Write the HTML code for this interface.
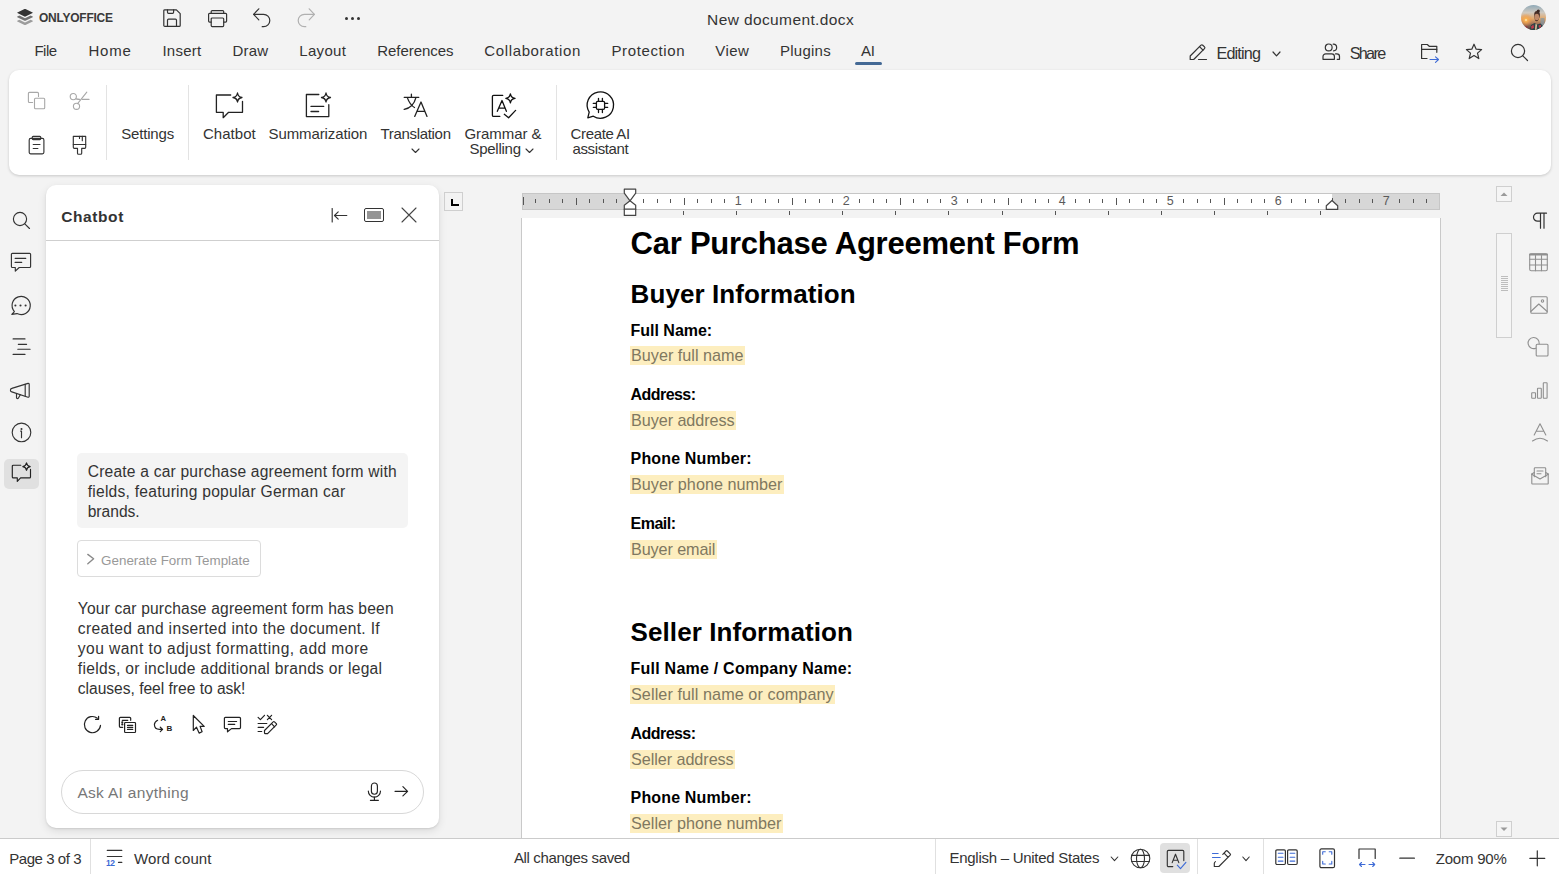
<!DOCTYPE html>
<html><head><meta charset="utf-8"><style>
html,body{margin:0;padding:0;}
body{width:1559px;height:874px;position:relative;overflow:hidden;background:#f3f3f3;font-family:"Liberation Sans",sans-serif;}
.t{position:absolute;white-space:nowrap;}
.i{position:absolute;overflow:visible;}
.b{position:absolute;box-sizing:border-box;}
</style></head><body>
<div class="b" style="left:9px;top:70px;width:1542px;height:105px;background:#fff;border-radius:10px;box-shadow:0 1px 3px rgba(0,0,0,.18);"></div>
<div class="b" style="left:521px;top:218px;width:920px;height:621px;background:#fff;border-left:1px solid #c9c9c9;border-right:1px solid #c9c9c9;"></div>
<div class="b" style="left:0;top:838px;width:1559px;height:36px;background:#fff;border-top:1px solid #cbcbcb;"></div>
<div class="b" style="left:46px;top:185px;width:393px;height:643px;background:#fff;border-radius:10px;box-shadow:0 3px 8px rgba(0,0,0,.10),0 1px 2px rgba(0,0,0,.10);"></div>
<div class="b" style="left:46px;top:240px;width:393px;height:1px;background:#cfcfcf;"></div>
<div class="t" style="left:39.00px;top:11.64px;font-size:12px;line-height:12px;color:#3a3a3a;font-weight:bold;letter-spacing:-0.250px;">ONLYOFFICE</div>
<div class="t" style="left:707.10px;top:11.68px;font-size:15.5px;line-height:15.5px;color:#333;letter-spacing:0.384px;">New document.docx</div>
<div class="t" style="left:34.40px;top:43.30px;font-size:15px;line-height:15px;color:#333;letter-spacing:-0.450px;">File</div>
<div class="t" style="left:88.50px;top:43.30px;font-size:15px;line-height:15px;color:#333;letter-spacing:0.767px;">Home</div>
<div class="t" style="left:162.40px;top:43.30px;font-size:15px;line-height:15px;color:#333;letter-spacing:0.260px;">Insert</div>
<div class="t" style="left:232.40px;top:43.30px;font-size:15px;line-height:15px;color:#333;letter-spacing:0.217px;">Draw</div>
<div class="t" style="left:299.20px;top:43.30px;font-size:15px;line-height:15px;color:#333;letter-spacing:0.350px;">Layout</div>
<div class="t" style="left:377.20px;top:43.30px;font-size:15px;line-height:15px;color:#333;letter-spacing:-0.044px;">References</div>
<div class="t" style="left:484.30px;top:43.30px;font-size:15px;line-height:15px;color:#333;letter-spacing:0.633px;">Collaboration</div>
<div class="t" style="left:611.50px;top:43.30px;font-size:15px;line-height:15px;color:#333;letter-spacing:0.617px;">Protection</div>
<div class="t" style="left:715.30px;top:43.30px;font-size:15px;line-height:15px;color:#333;letter-spacing:0.400px;">View</div>
<div class="t" style="left:780.00px;top:43.30px;font-size:15px;line-height:15px;color:#333;letter-spacing:0.250px;">Plugins</div>
<div class="t" style="left:861.00px;top:43.30px;font-size:15px;line-height:15px;color:#333;letter-spacing:-0.250px;">AI</div>
<div class="b" style="left:855px;top:62px;width:27px;height:3px;background:#446995;border-radius:2px;"></div>
<div class="t" style="left:1216.40px;top:45.38px;font-size:16.2px;line-height:16.2px;color:#333;letter-spacing:-0.808px;">Editing</div>
<div class="t" style="left:1349.70px;top:45.38px;font-size:16.2px;line-height:16.2px;color:#333;letter-spacing:-1.688px;">Share</div>
<div class="t" style="left:121.20px;top:126.40px;font-size:15px;line-height:15px;color:#333;letter-spacing:-0.171px;">Settings</div>
<div class="t" style="left:203.00px;top:126.30px;font-size:15px;line-height:15px;color:#333;letter-spacing:0.025px;">Chatbot</div>
<div class="t" style="left:268.50px;top:126.30px;font-size:15px;line-height:15px;color:#333;letter-spacing:-0.104px;">Summarization</div>
<div class="t" style="left:380.40px;top:126.30px;font-size:15px;line-height:15px;color:#333;letter-spacing:-0.305px;">Translation</div>
<div class="t" style="left:464.40px;top:126.05px;font-size:15px;line-height:15px;color:#333;letter-spacing:-0.037px;">Grammar &amp;</div>
<div class="t" style="left:469.40px;top:141.05px;font-size:15px;line-height:15px;color:#333;letter-spacing:-0.250px;">Spelling</div>
<div class="t" style="left:570.60px;top:126.05px;font-size:15px;line-height:15px;color:#333;letter-spacing:-0.369px;">Create AI</div>
<div class="t" style="left:572.50px;top:140.80px;font-size:15px;line-height:15px;color:#333;letter-spacing:-0.375px;">assistant</div>
<div class="b" style="left:106px;top:85px;width:1px;height:75px;background:#e3e3e3;"></div>
<div class="b" style="left:188px;top:85px;width:1px;height:75px;background:#e3e3e3;"></div>
<div class="b" style="left:556px;top:85px;width:1px;height:75px;background:#e3e3e3;"></div>
<div class="t" style="left:61.30px;top:209.08px;font-size:15.5px;line-height:15.5px;color:#333;font-weight:bold;letter-spacing:0.575px;">Chatbot</div>
<div class="b" style="left:77px;top:453px;width:331px;height:75px;background:#f4f4f4;border-radius:5px;"></div>
<div class="t" style="left:87.70px;top:463.79px;font-size:15.6px;line-height:15.6px;color:#333;letter-spacing:0.204px;">Create a car purchase agreement form with</div>
<div class="t" style="left:87.70px;top:483.79px;font-size:15.6px;line-height:15.6px;color:#333;letter-spacing:0.247px;">fields, featuring popular German car</div>
<div class="t" style="left:87.70px;top:503.79px;font-size:15.6px;line-height:15.6px;color:#333;">brands.</div>
<div class="b" style="left:77px;top:540px;width:184px;height:37px;border:1px solid #dcdcdc;border-radius:4px;"></div>
<div class="t" style="left:101.10px;top:554.05px;font-size:13.4px;line-height:13.4px;color:#999;">Generate Form Template</div>
<div class="t" style="left:77.80px;top:600.59px;font-size:15.6px;line-height:15.6px;color:#333;letter-spacing:0.172px;">Your car purchase agreement form has been</div>
<div class="t" style="left:77.80px;top:620.59px;font-size:15.6px;line-height:15.6px;color:#333;letter-spacing:0.344px;">created and inserted into the document. If</div>
<div class="t" style="left:77.80px;top:640.59px;font-size:15.6px;line-height:15.6px;color:#333;letter-spacing:0.434px;">you want to adjust formatting, add more</div>
<div class="t" style="left:77.80px;top:660.59px;font-size:15.6px;line-height:15.6px;color:#333;letter-spacing:0.295px;">fields, or include additional brands or legal</div>
<div class="t" style="left:77.80px;top:680.59px;font-size:15.6px;line-height:15.6px;color:#333;letter-spacing:-0.020px;">clauses, feel free to ask!</div>
<div class="b" style="left:61px;top:770px;width:363px;height:44px;border:1px solid #d8d8d8;border-radius:22px;"></div>
<div class="t" style="left:77.40px;top:784.68px;font-size:15.5px;line-height:15.5px;color:#777;letter-spacing:0.311px;">Ask AI anything</div>
<div class="t" style="left:9.20px;top:850.80px;font-size:15px;line-height:15px;color:#333;letter-spacing:-0.435px;">Page 3 of 3</div>
<div class="t" style="left:134.00px;top:850.90px;font-size:15px;line-height:15px;color:#333;letter-spacing:0.117px;">Word count</div>
<div class="t" style="left:513.90px;top:850.40px;font-size:15px;line-height:15px;color:#333;letter-spacing:-0.341px;">All changes saved</div>
<div class="t" style="left:949.50px;top:850.40px;font-size:15px;line-height:15px;color:#333;letter-spacing:-0.273px;">English – United States</div>
<div class="t" style="left:1435.80px;top:851.30px;font-size:15px;line-height:15px;color:#333;letter-spacing:-0.221px;">Zoom 90%</div>
<div class="b" style="left:90px;top:839px;width:1px;height:35px;background:#e0e0e0;"></div>
<div class="b" style="left:935px;top:839px;width:1px;height:35px;background:#e0e0e0;"></div>
<div class="b" style="left:1197px;top:839px;width:1px;height:35px;background:#e0e0e0;"></div>
<div class="b" style="left:1263px;top:839px;width:1px;height:35px;background:#e0e0e0;"></div>
<div class="b" style="left:1160px;top:843px;width:30px;height:30px;background:#e0e0e0;border-radius:4px;"></div>
<div class="t" style="left:630.60px;top:228.05px;font-size:31px;line-height:31px;color:#000;font-weight:bold;letter-spacing:-0.246px;">Car Purchase Agreement Form</div>
<div class="t" style="left:630.60px;top:281.29px;font-size:26px;line-height:26px;color:#000;font-weight:bold;letter-spacing:0.069px;">Buyer Information</div>
<div class="t" style="left:630.60px;top:323.15px;font-size:16px;line-height:16px;color:#000;font-weight:bold;letter-spacing:-0.022px;">Full Name:</div>
<div class="b" style="left:630px;top:346px;width:114.7px;height:19px;background:#fdeebf;"></div>
<div class="t" style="left:631.00px;top:346.58px;font-size:16.2px;line-height:16.2px;color:#80785f;">Buyer full name</div>
<div class="t" style="left:630.60px;top:386.95px;font-size:16px;line-height:16px;color:#000;font-weight:bold;letter-spacing:-0.564px;">Address:</div>
<div class="b" style="left:630px;top:411px;width:105.9px;height:19px;background:#fdeebf;"></div>
<div class="t" style="left:631.00px;top:411.58px;font-size:16.2px;line-height:16.2px;color:#80785f;letter-spacing:-0.063px;">Buyer address</div>
<div class="t" style="left:630.60px;top:451.35px;font-size:16px;line-height:16px;color:#000;font-weight:bold;letter-spacing:0.150px;">Phone Number:</div>
<div class="b" style="left:630px;top:475px;width:153.7px;height:19px;background:#fdeebf;"></div>
<div class="t" style="left:631.00px;top:475.58px;font-size:16.2px;line-height:16.2px;color:#80785f;letter-spacing:0.012px;">Buyer phone number</div>
<div class="t" style="left:630.60px;top:515.55px;font-size:16px;line-height:16px;color:#000;font-weight:bold;letter-spacing:-0.520px;">Email:</div>
<div class="b" style="left:630px;top:540px;width:86.7px;height:19px;background:#fdeebf;"></div>
<div class="t" style="left:631.00px;top:540.58px;font-size:16.2px;line-height:16.2px;color:#80785f;letter-spacing:-0.105px;">Buyer email</div>
<div class="t" style="left:630.60px;top:618.99px;font-size:26px;line-height:26px;color:#000;font-weight:bold;letter-spacing:0.074px;">Seller Information</div>
<div class="t" style="left:630.60px;top:661.25px;font-size:16px;line-height:16px;color:#000;font-weight:bold;letter-spacing:0.227px;">Full Name / Company Name:</div>
<div class="b" style="left:630px;top:685px;width:205.0px;height:19px;background:#fdeebf;"></div>
<div class="t" style="left:631.00px;top:685.58px;font-size:16.2px;line-height:16.2px;color:#80785f;letter-spacing:0.077px;">Seller full name or company</div>
<div class="t" style="left:630.60px;top:726.25px;font-size:16px;line-height:16px;color:#000;font-weight:bold;letter-spacing:-0.564px;">Address:</div>
<div class="b" style="left:630px;top:750px;width:105.0px;height:19px;background:#fdeebf;"></div>
<div class="t" style="left:631.00px;top:750.58px;font-size:16.2px;line-height:16.2px;color:#80785f;letter-spacing:-0.058px;">Seller address</div>
<div class="t" style="left:630.60px;top:790.15px;font-size:16px;line-height:16px;color:#000;font-weight:bold;letter-spacing:0.150px;">Phone Number:</div>
<div class="b" style="left:630px;top:814px;width:152.6px;height:19px;background:#fdeebf;"></div>
<div class="t" style="left:631.00px;top:814.58px;font-size:16.2px;line-height:16.2px;color:#80785f;">Seller phone number</div>
<svg class="i" style="left:16px;top:8px" width="18" height="18" viewBox="0 0 18 18">
<path d="M9 0.9 Q9.2 0.9 9.5 1.05 L16.6 4.5 Q17.1 4.8 16.6 5.1 L9.5 8.5 Q9 8.75 8.5 8.5 L1.4 5.1 Q0.9 4.8 1.4 4.5 L8.5 1.05 Q8.8 0.9 9 0.9 Z" fill="#333"/>
<path d="M3.4 7.6 L1.3 8.6 Q0.9 8.9 1.3 9.2 L8.5 12.7 Q9 12.95 9.5 12.7 L16.7 9.2 Q17.1 8.9 16.7 8.6 L14.6 7.6 L9.5 10.1 Q9 10.35 8.5 10.1 Z" fill="#707070"/>
<path d="M3.4 11.8 L1.3 12.8 Q0.9 13.1 1.3 13.4 L8.5 16.9 Q9 17.15 9.5 16.9 L16.7 13.4 Q17.1 13.1 16.7 12.8 L14.6 11.8 L9.5 14.3 Q9 14.55 8.5 14.3 Z" fill="#9c9c9c"/>
</svg>
<svg class="i" style="left:163px;top:9px;" width="18" height="18" viewBox="0 0 18 18" fill="none" stroke="#333" stroke-width="1.2" stroke-linecap="round" stroke-linejoin="round"><path d="M1.9 0.8 H13.4 L17.2 4.6 V16.4 A1 1 0 0 1 16.2 17.4 H1.8 A1 1 0 0 1 0.8 16.4 V1.8 A1 1 0 0 1 1.9 0.8 Z"/><path d="M4.5 0.8 V3.3 A1 1 0 0 0 5.5 4.3 H9.6 A1 1 0 0 0 10.6 3.3 V0.8"/><path d="M4.5 17.4 V11.2 A1 1 0 0 1 5.5 10.2 H12.5 A1 1 0 0 1 13.5 11.2 V17.4"/></svg>
<svg class="i" style="left:208px;top:10px;" width="19" height="17" viewBox="0 0 19 17" fill="none" stroke="#333" stroke-width="1.2" stroke-linecap="round" stroke-linejoin="round"><path d="M3.2 3.3 V1.6 A1 1 0 0 1 4.2 0.6 H14.7 A1 1 0 0 1 15.7 1.6 V3.3"/><path d="M3.2 12.1 H1.6 A1 1 0 0 1 0.6 11.1 V4.3 A1 1 0 0 1 1.6 3.3 H17.6 A1 1 0 0 1 18.6 4.3 V11.1 A1 1 0 0 1 17.6 12.1 H15.7"/><path d="M4.2 8 H14.7 A1 1 0 0 1 15.7 9 V15.6 A1 1 0 0 1 14.7 16.6 H4.2 A1 1 0 0 1 3.2 15.6 V9 A1 1 0 0 1 4.2 8 Z"/></svg>
<svg class="i" style="left:253px;top:8px;" width="18" height="20" viewBox="0 0 18 20" fill="none" stroke="#333" stroke-width="1.2" stroke-linecap="round" stroke-linejoin="round"><path d="M5.8 0.8 L0.6 6.3 L5.8 11.9"/><path d="M0.8 6.3 H10.6 A6.2 6.2 0 0 1 10.6 18.7 H9.2"/></svg>
<svg class="i" style="left:298px;top:8px;" width="18" height="20" viewBox="0 0 18 20" fill="none" stroke="#b0b0b0" stroke-width="1.2" stroke-linecap="round" stroke-linejoin="round"><path d="M11.2 0.8 L16.4 6.3 L11.2 11.9"/><path d="M16.2 6.3 H6.4 A6.2 6.2 0 0 0 6.4 18.7 H7.8"/></svg>
<div class="b" style="left:344.9px;top:16.8px;width:3.2px;height:3.2px;border-radius:50%;background:#333"></div>
<div class="b" style="left:350.7px;top:16.8px;width:3.2px;height:3.2px;border-radius:50%;background:#333"></div>
<div class="b" style="left:356.59999999999997px;top:16.8px;width:3.2px;height:3.2px;border-radius:50%;background:#333"></div>
<svg class="i" style="left:1521px;top:4.8px" width="25" height="25" viewBox="0 0 25 25">
<defs><linearGradient id="avs" x1="0" y1="0" x2="0" y2="1"><stop offset="0" stop-color="#8fa9b8"/><stop offset="0.3" stop-color="#cfc9c0"/><stop offset="0.55" stop-color="#e3a86a"/><stop offset="0.75" stop-color="#a07258"/><stop offset="1" stop-color="#4a3a3a"/></linearGradient>
<radialGradient id="avsun" cx="0.5" cy="0.5" r="0.5"><stop offset="0" stop-color="#fff4d0"/><stop offset="0.25" stop-color="#f7b050"/><stop offset="1" stop-color="#f09040" stop-opacity="0"/></radialGradient>
<clipPath id="avc"><circle cx="12.5" cy="12.5" r="12.5"/></clipPath></defs>
<g clip-path="url(#avc)"><rect width="25" height="25" fill="url(#avs)"/>
<circle cx="5" cy="15" r="6.5" fill="url(#avsun)"/>
<rect x="19.5" y="13" width="4" height="9" fill="#7f98aa" opacity="0.7"/>
<path d="M13.2 10 C13 7 14.5 5.6 16.5 6 C18.5 6.4 19.3 8.5 18.8 11 C18.4 13.5 17.5 15.5 16 16.3 L14.5 16 C13.6 14.5 13.3 12 13.2 10Z" fill="#4a3028"/>
<circle cx="17.3" cy="6" r="1.6" fill="#3a2622"/>
<ellipse cx="15.8" cy="12" rx="2.3" ry="3.3" fill="#c08a6a"/>
<path d="M8.5 25 L10 20 L13.5 18 L16 19.5 L19.5 18.5 L22 21 L23 25Z" fill="#2a4446"/>
<path d="M10 21.5 L12.5 19.5 L13 23 L10.5 24Z" fill="#c0394a"/>
<path d="M17.5 20.5 L20 19.8 L19.8 22.5 L18 22.8Z" fill="#c0394a"/>
<path d="M14.5 19 L16 19.5 L15.5 25 L14 25Z" fill="#e8c8a0"/>
<path d="M2 22 L6 21 L7 25 H1Z" fill="#a03040" opacity="0.8"/>
</g></svg>
<svg class="i" style="left:1189px;top:43px;" width="19" height="18" viewBox="0 0 19 18" fill="none" stroke="#333" stroke-width="1.2" stroke-linecap="round" stroke-linejoin="round"><path d="M1.2 16.5 V13 L12 2.2 A1.3 1.3 0 0 1 13.8 2.2 L15.5 3.9 A1.3 1.3 0 0 1 15.5 5.7 L4.7 16.5 Z"/><path d="M10.5 3.7 L14 7.2"/><path d="M9.5 16.5 H17.5"/></svg>
<svg class="i" style="left:1272px;top:51px;" width="9" height="6" viewBox="0 0 9 6" fill="none" stroke="#333" stroke-width="1.2" stroke-linecap="round" stroke-linejoin="round"><path d="M1 1 L4.5 4.8 L8 1"/></svg>
<svg class="i" style="left:1322px;top:43px;" width="19" height="18" viewBox="0 0 19 18" fill="none" stroke="#333" stroke-width="1.2" stroke-linecap="round" stroke-linejoin="round"><circle cx="6.7" cy="4.4" r="3.4"/><path d="M1 16.3 V13.5 A2.7 2.7 0 0 1 3.7 10.8 H9.7 A2.7 2.7 0 0 1 12.4 13.5 V16.3 Z"/><path d="M11.2 1.2 A3.3 3.3 0 0 1 11.5 7.8"/><path d="M13.5 10.8 H14.8 A2.7 2.7 0 0 1 17.5 13.5 V16.3 H15.2"/></svg>
<svg class="i" style="left:1420px;top:43px;" width="20" height="20" viewBox="0 0 20 20" fill="none" stroke="#333" stroke-width="1.2" stroke-linecap="round" stroke-linejoin="round"><path d="M7 15.5 H1.6 V1.5 H7.3 L9.2 3.3 H16.8 V9.3"/><path d="M1.6 6.3 H16.8"/></svg>
<svg class="i" style="left:1420px;top:43px;" width="20" height="20" viewBox="0 0 20 20" fill="none" stroke="#3e6bd6" stroke-width="1.1" stroke-linecap="round" stroke-linejoin="round"><path d="M10 16.5 H18.5 M15.5 13.8 L18.5 16.5 L15.5 19.3"/></svg>
<svg class="i" style="left:1465px;top:43px;" width="18" height="17" viewBox="0 0 18 17" fill="none" stroke="#333" stroke-width="1.2" stroke-linecap="round" stroke-linejoin="round"><path d="M9 1.2 L11.2 6.2 L16.6 6.6 L12.5 10.1 L13.8 15.6 L9 12.6 L4.2 15.6 L5.5 10.1 L1.4 6.6 L6.8 6.2 Z"/></svg>
<svg class="i" style="left:1510px;top:43px;" width="19" height="19" viewBox="0 0 19 19" fill="none" stroke="#333" stroke-width="1.2" stroke-linecap="round" stroke-linejoin="round"><circle cx="8" cy="8" r="6.6"/><path d="M12.8 12.8 L17.5 17.5"/></svg>
<svg class="i" style="left:27px;top:91px;" width="19" height="19" viewBox="0 0 19 19" fill="none" stroke="#a8a8a8" stroke-width="1.1" stroke-linecap="round" stroke-linejoin="round"><path d="M11.5 5.5 V2.4 A1 1 0 0 0 10.5 1.4 H2.4 A1 1 0 0 0 1.4 2.4 V10.5 A1 1 0 0 0 2.4 11.5 H5.6"/><rect x="7.5" y="7.3" width="10.2" height="10.4" rx="1"/></svg>
<svg class="i" style="left:69px;top:91px;" width="21" height="20" viewBox="0 0 21 20" fill="none" stroke="#a8a8a8" stroke-width="1.1" stroke-linecap="round" stroke-linejoin="round"><circle cx="4.3" cy="5.6" r="3.1"/><circle cx="7.5" cy="15.3" r="3.1"/><path d="M8.6 12.6 L17.8 1.1"/><path d="M7.1 7.9 Q9 8.4 10.6 8.4"/><path d="M13.3 8.4 H20"/></svg>
<svg class="i" style="left:28px;top:135px;" width="17" height="20" viewBox="0 0 17 20" fill="none" stroke="#333" stroke-width="1.15" stroke-linecap="round" stroke-linejoin="round"><rect x="1.2" y="3.4" width="14.7" height="15.4" rx="1.5"/><rect x="4.2" y="1.4" width="8.6" height="3.2" rx="1"/><path d="M5.2 9.5 H12 M5.2 13.5 H9.9"/></svg>
<svg class="i" style="left:72px;top:135px;" width="15" height="21" viewBox="0 0 15 21" fill="none" stroke="#333" stroke-width="1.15" stroke-linecap="round" stroke-linejoin="round"><path d="M1.3 1.4 H13.7 V12.3 A1 1 0 0 1 12.7 13.3 H9.7 V18.2 A1 1 0 0 1 8.7 19.2 H6.5 A1 1 0 0 1 5.5 18.2 V13.3 H2.3 A1 1 0 0 1 1.3 12.3 Z"/><path d="M1.3 9.5 H13.7"/><path d="M7.5 1.4 V3.5 M10.3 1.4 V5.7"/></svg>
<svg class="i" style="left:215px;top:92px;" width="30" height="28" viewBox="0 0 30 28" fill="none" stroke="#222" stroke-width="1.3" stroke-linecap="round" stroke-linejoin="round"><path d="M15.7 3 H1.4 V20.3 H8.2 V25.7 L13.6 20.3 H27.5 V9.3"/><path d="M22.5 1 Q23.1 4.9 27 5.5 Q23.1 6.1 22.5 10 Q21.9 6.1 18 5.5 Q21.9 4.9 22.5 1 Z"/></svg>
<svg class="i" style="left:305px;top:92px;" width="27" height="27" viewBox="0 0 27 27" fill="none" stroke="#222" stroke-width="1.3" stroke-linecap="round" stroke-linejoin="round"><path d="M13.8 2.5 H1.4 V24.6 H23.8 V12.7"/><path d="M6 14.4 H18.7 M6 19.5 H13.6"/><path d="M21 1 Q21.6 4.9 25.5 5.5 Q21.6 6.1 21 10 Q20.4 6.1 16.5 5.5 Q20.4 4.9 21 1 Z"/></svg>
<svg class="i" style="left:398px;top:88px;" width="36" height="34" viewBox="0 0 36 34" fill="none" stroke="#222" stroke-width="1.3" stroke-linecap="round" stroke-linejoin="round"><path d="M6.2 9.3 H20.8 M13.4 6.2 V9.3"/><path d="M9.3 9.6 Q12 17 16.5 19.5"/><path d="M17.9 9.6 Q15.5 19.5 6.2 21.4"/><path d="M16.7 28.4 L23 14 L29 28.4 M19.3 23.3 H26.8"/></svg>
<svg class="i" style="left:411px;top:148px;" width="9" height="6" viewBox="0 0 9 6" fill="none" stroke="#333" stroke-width="1.1" stroke-linecap="round" stroke-linejoin="round"><path d="M1 1 L4.5 4.5 L8 1"/></svg>
<svg class="i" style="left:486px;top:88px;" width="34" height="34" viewBox="0 0 34 34" fill="none" stroke="#111" stroke-width="1.3" stroke-linecap="round" stroke-linejoin="round"><path d="M16.7 7.4 H7.6 A1.2 1.2 0 0 0 6.4 8.6 V27.2 A1.2 1.2 0 0 0 7.6 28.4 H13.8"/><path d="M11.3 23.3 L16 12.5 L20.4 23.3 M12.6 20.2 H19.2"/><path d="M18.3 26.3 L22.6 29.8 L29.6 22.4"/><path d="M24.4 5.8 Q25 9.7 29 10.3 Q25 10.9 24.4 14.8 Q23.8 10.9 19.8 10.3 Q23.8 9.7 24.4 5.8 Z"/></svg>
<svg class="i" style="left:525px;top:148px;" width="9" height="6" viewBox="0 0 9 6" fill="none" stroke="#333" stroke-width="1.1" stroke-linecap="round" stroke-linejoin="round"><path d="M1 1 L4.5 4.5 L8 1"/></svg>
<svg class="i" style="left:582px;top:88px;" width="36" height="34" viewBox="0 0 36 34" fill="none" stroke="#111" stroke-width="1.3" stroke-linecap="round" stroke-linejoin="round"><path d="M7.2 24.1 A13.2 13.2 0 1 1 11.3 28.2 L5.8 29.8 Z"/><rect x="14.4" y="13.4" width="8.2" height="8" rx="1.3"/><path d="M16.5 10.3 V13.4 M20.4 10.3 V13.4 M16.5 21.4 V24.5 M20.4 21.4 V24.5 M11.3 15.4 H14.4 M11.3 19.3 H14.4 M22.6 15.4 H25.7 M22.6 19.3 H25.7"/></svg>
<svg class="i" style="left:12px;top:211px;" width="19" height="19" viewBox="0 0 19 19" fill="none" stroke="#333" stroke-width="1.15" stroke-linecap="round" stroke-linejoin="round"><circle cx="8" cy="8" r="6.6"/><path d="M12.8 12.8 L17.5 17.5"/></svg>
<svg class="i" style="left:10px;top:252px;" width="22" height="21" viewBox="0 0 22 21" fill="none" stroke="#333" stroke-width="1.15" stroke-linecap="round" stroke-linejoin="round"><path d="M2.4 1.3 H19.6 A1 1 0 0 1 20.6 2.3 V14.5 A1 1 0 0 1 19.6 15.5 H9.2 L5.3 19.2 V15.5 H2.4 A1 1 0 0 1 1.4 14.5 V2.3 A1 1 0 0 1 2.4 1.3 Z"/><path d="M5.1 6.3 H15.8 M5.1 10.4 H11.7"/></svg>
<svg class="i" style="left:10.4px;top:295px;" width="21" height="21" viewBox="0 0 21 21" fill="none" stroke="#333" stroke-width="1.15" stroke-linecap="round" stroke-linejoin="round"><path d="M4.4 16.6 A9.1 9.1 0 1 1 7 18.6 L1.8 19.4 Z"/><circle cx="5.4" cy="10.5" r="1.05" fill="#333" stroke="none"/><circle cx="10.5" cy="10.5" r="1.05" fill="#333" stroke="none"/><circle cx="15.6" cy="10.5" r="1.05" fill="#333" stroke="none"/></svg>
<svg class="i" style="left:12px;top:337px;" width="19" height="19" viewBox="0 0 19 19" fill="none" stroke="#333" stroke-width="1.15" stroke-linecap="round" stroke-linejoin="round"><path d="M1.1 1.9 H13 M6.3 7.3 H14.6 M5.8 12.2 H18.1 M1.1 17.4 H13"/></svg>
<svg class="i" style="left:5px;top:375px;" width="32" height="30" viewBox="0 0 32 30" fill="none" stroke="#333" stroke-width="1.15" stroke-linecap="round" stroke-linejoin="round"><path d="M6.8 13.4 L23 8.4 A1 1 0 0 1 24.2 9.3 V21.3 A1 1 0 0 1 23 22.2 L6.8 16.9 A1.8 1.8 0 0 1 6.8 13.4 Z"/><path d="M20.2 9.4 V21"/><path d="M11.5 18.6 V22.5 A1 1 0 0 0 13.3 23.2 L15.3 19.8"/></svg>
<svg class="i" style="left:11px;top:422px;" width="21" height="21" viewBox="0 0 21 21" fill="none" stroke="#333" stroke-width="1.15" stroke-linecap="round" stroke-linejoin="round"><circle cx="10.5" cy="10.4" r="9.3"/><path d="M9.6 9.1 H10.5 V15.7"/><circle cx="10.5" cy="7" r=".45" fill="#333"/></svg>
<div class="b" style="left:4px;top:459px;width:35px;height:29.5px;background:#e0e0e0;border-radius:5px;"></div>
<svg class="i" style="left:11px;top:462px;" width="22" height="21" viewBox="0 0 22 21" fill="none" stroke="#222" stroke-width="1.15" stroke-linecap="round" stroke-linejoin="round"><path d="M9.8 3.2 H2.3 A1 1 0 0 0 1.3 4.2 V14.9 A1 1 0 0 0 2.3 15.9 H6.3 V19.4 L9.6 15.9 H18.5 A1 1 0 0 0 19.5 14.9 V7.4"/><path d="M15.5 0.9 Q16 4.1 19.2 4.6 Q16 5.1 15.5 8.3 Q15 5.1 11.8 4.6 Q15 4.1 15.5 0.9 Z"/></svg>
<svg class="i" style="left:331px;top:208px;shape-rendering:geometricPrecision" width="17" height="15" viewBox="0 0 17 15" fill="none" stroke="#333" stroke-width="1.15" stroke-linecap="round" stroke-linejoin="round"><path d="M1.2 0.6 V14"/><path d="M15.8 7.5 H3.5 M7.2 3.8 L3.5 7.5 L7.2 11.2"/></svg>
<div class="b" style="left:364.2px;top:208.2px;width:20px;height:14px;border:1.3px solid #333;border-radius:2px;"></div>
<div class="b" style="left:367px;top:211px;width:14px;height:8px;background:#959595;"></div>
<svg class="i" style="left:401px;top:207px;" width="16" height="16" viewBox="0 0 16 16" fill="none" stroke="#444" stroke-width="1.1" stroke-linecap="round" stroke-linejoin="round"><path d="M1 1 L15 15 M15 1 L1 15"/></svg>
<svg class="i" style="left:86px;top:553px;" width="9" height="12" viewBox="0 0 9 12" fill="none" stroke="#8a8a8a" stroke-width="1.4" stroke-linecap="round" stroke-linejoin="round"><path d="M1.8 1.4 L7.6 5.8 L1.8 10.7"/></svg>
<svg class="i" style="left:80px;top:710px;" width="100" height="30" viewBox="0 0 100 30" fill="none" stroke="#222" stroke-width="1.2" stroke-linecap="round" stroke-linejoin="round"><path d="M20.5 15.4 A8.1 8.1 0 1 1 17.4 8.2"/><path d="M18.6 6.3 V9.3 H15.5"/><path d="M42.7 17.3 H40.4 A1 1 0 0 1 39.4 16.3 V8.4 A1 1 0 0 1 40.4 7.4 H49.7 A1 1 0 0 1 50.7 8.4 V10.3"/><path d="M42.3 10.3 H47.8"/><rect x="44.6" y="12.5" width="10.9" height="10" rx=".8"/><path d="M47.5 15.4 H52.7 M47.5 17.4 H52.7 M47.5 19.4 H52.7"/><path d="M77.6 10.3 Q74.4 12 74.4 14.8 Q74.6 19.4 79.5 19.4 H82.5 M80.3 17.2 L82.6 19.4 L80.3 21.6"/><circle cx="42.3" cy="12.3" r=".5" fill="#222"/><circle cx="42.3" cy="14.4" r=".5" fill="#222"/></svg>
<div class="t" style="left:160.60px;top:715.07px;font-size:7.6px;line-height:7.6px;color:#222;font-weight:bold;">A</div>
<div class="t" style="left:166.40px;top:725.03px;font-size:8px;line-height:8px;color:#222;font-weight:bold;">B</div>
<svg class="i" style="left:185px;top:710px;" width="100" height="30" viewBox="0 0 100 30" fill="none" stroke="#222" stroke-width="1.2" stroke-linecap="round" stroke-linejoin="round"><path d="M8.3 5.5 V20.5 L11.5 17.2 L14.1 23.1 L17.1 21.8 L15.1 16.4 H19.2 Z"/><path d="M40.4 7.4 H54.5 A1 1 0 0 1 55.5 8.4 V17.6 A1 1 0 0 1 54.5 18.6 H46.5 L42.5 21.8 V18.6 H40.4 A1 1 0 0 1 39.4 17.6 V8.4 A1 1 0 0 1 40.4 7.4 Z"/><path d="M43.3 11.5 H51.6 M43.3 14.4 H49.7"/><path d="M73.1 7.4 L75.4 9.6 L79.5 5.3 M82.4 5.3 L86.6 9.6 M86.6 5.3 L82.4 9.6"/><path d="M73.1 13.5 H81.8 M73.1 17.3 H78.6 M73.1 21.5 H76.7"/><path d="M79.5 20.5 L88.2 11.8 A0.9 0.9 0 0 1 89.5 11.8 L91.3 13.6 A0.9 0.9 0 0 1 91.3 14.9 L82.6 23.6 H80.4 A0.9 0.9 0 0 1 79.5 22.7 Z"/><path d="M87 14.2 L89.6 16.8"/></svg>
<svg class="i" style="left:367px;top:782px;" width="15" height="20" viewBox="0 0 15 20" fill="none" stroke="#222" stroke-width="1.15" stroke-linecap="round" stroke-linejoin="round"><rect x="4.4" y="1" width="6" height="11.2" rx="3"/><path d="M1.3 9 A6.1 6.1 0 0 0 13.5 9"/><path d="M7.4 15 V18.3 M3.4 18.3 H11.4"/></svg>
<svg class="i" style="left:394px;top:785px;" width="15" height="13" viewBox="0 0 15 13" fill="none" stroke="#222" stroke-width="1.15" stroke-linecap="round" stroke-linejoin="round"><path d="M1 6.3 H13.6 M8.9 1.7 L13.6 6.3 L8.9 10.9"/></svg>
<div class="b" style="left:444px;top:192px;width:19px;height:19px;border:1px solid #cfcfcf;"></div>
<div class="b" style="left:451px;top:199px;width:2.3px;height:7px;background:#000;"></div><div class="b" style="left:451px;top:204px;width:7.5px;height:2.3px;background:#000;"></div>
<div class="b" style="left:522px;top:193px;width:918px;height:17px;background:#fff;border:1px solid #c6c6c6;"></div>
<div class="b" style="left:523px;top:194px;width:107px;height:15px;background:#d7d7d7;"></div>
<div class="b" style="left:1332px;top:194px;width:107px;height:15px;background:#d7d7d7;"></div>
<div class="b" style="left:523px;top:197px;width:1px;height:8px;background:#555"></div><div class="b" style="left:535px;top:198.8px;width:1px;height:4px;background:#555;"></div><div class="b" style="left:549px;top:198.8px;width:1px;height:4px;background:#555;"></div><div class="b" style="left:562px;top:198.8px;width:1px;height:4px;background:#555;"></div><div class="b" style="left:576px;top:198px;width:1px;height:6.5px;background:#555;"></div><div class="b" style="left:589px;top:198.8px;width:1px;height:4px;background:#555;"></div><div class="b" style="left:603px;top:198.8px;width:1px;height:4px;background:#555;"></div><div class="b" style="left:616px;top:198.8px;width:1px;height:4px;background:#555;"></div><div class="b" style="left:643px;top:198.8px;width:1px;height:4px;background:#555;"></div><div class="b" style="left:657px;top:198.8px;width:1px;height:4px;background:#555;"></div><div class="b" style="left:670px;top:198.8px;width:1px;height:4px;background:#555;"></div><div class="b" style="left:684px;top:198px;width:1px;height:6.5px;background:#555;"></div><div class="b" style="left:697px;top:198.8px;width:1px;height:4px;background:#555;"></div><div class="b" style="left:711px;top:198.8px;width:1px;height:4px;background:#555;"></div><div class="b" style="left:724px;top:198.8px;width:1px;height:4px;background:#555;"></div><div class="b" style="left:751px;top:198.8px;width:1px;height:4px;background:#555;"></div><div class="b" style="left:765px;top:198.8px;width:1px;height:4px;background:#555;"></div><div class="b" style="left:778px;top:198.8px;width:1px;height:4px;background:#555;"></div><div class="b" style="left:792px;top:198px;width:1px;height:6.5px;background:#555;"></div><div class="b" style="left:805px;top:198.8px;width:1px;height:4px;background:#555;"></div><div class="b" style="left:819px;top:198.8px;width:1px;height:4px;background:#555;"></div><div class="b" style="left:832px;top:198.8px;width:1px;height:4px;background:#555;"></div><div class="b" style="left:859px;top:198.8px;width:1px;height:4px;background:#555;"></div><div class="b" style="left:873px;top:198.8px;width:1px;height:4px;background:#555;"></div><div class="b" style="left:886px;top:198.8px;width:1px;height:4px;background:#555;"></div><div class="b" style="left:900px;top:198px;width:1px;height:6.5px;background:#555;"></div><div class="b" style="left:913px;top:198.8px;width:1px;height:4px;background:#555;"></div><div class="b" style="left:927px;top:198.8px;width:1px;height:4px;background:#555;"></div><div class="b" style="left:940px;top:198.8px;width:1px;height:4px;background:#555;"></div><div class="b" style="left:967px;top:198.8px;width:1px;height:4px;background:#555;"></div><div class="b" style="left:981px;top:198.8px;width:1px;height:4px;background:#555;"></div><div class="b" style="left:994px;top:198.8px;width:1px;height:4px;background:#555;"></div><div class="b" style="left:1008px;top:198px;width:1px;height:6.5px;background:#555;"></div><div class="b" style="left:1021px;top:198.8px;width:1px;height:4px;background:#555;"></div><div class="b" style="left:1035px;top:198.8px;width:1px;height:4px;background:#555;"></div><div class="b" style="left:1048px;top:198.8px;width:1px;height:4px;background:#555;"></div><div class="b" style="left:1075px;top:198.8px;width:1px;height:4px;background:#555;"></div><div class="b" style="left:1089px;top:198.8px;width:1px;height:4px;background:#555;"></div><div class="b" style="left:1102px;top:198.8px;width:1px;height:4px;background:#555;"></div><div class="b" style="left:1116px;top:198px;width:1px;height:6.5px;background:#555;"></div><div class="b" style="left:1129px;top:198.8px;width:1px;height:4px;background:#555;"></div><div class="b" style="left:1143px;top:198.8px;width:1px;height:4px;background:#555;"></div><div class="b" style="left:1156px;top:198.8px;width:1px;height:4px;background:#555;"></div><div class="b" style="left:1183px;top:198.8px;width:1px;height:4px;background:#555;"></div><div class="b" style="left:1197px;top:198.8px;width:1px;height:4px;background:#555;"></div><div class="b" style="left:1210px;top:198.8px;width:1px;height:4px;background:#555;"></div><div class="b" style="left:1224px;top:198px;width:1px;height:6.5px;background:#555;"></div><div class="b" style="left:1237px;top:198.8px;width:1px;height:4px;background:#555;"></div><div class="b" style="left:1251px;top:198.8px;width:1px;height:4px;background:#555;"></div><div class="b" style="left:1264px;top:198.8px;width:1px;height:4px;background:#555;"></div><div class="b" style="left:1291px;top:198.8px;width:1px;height:4px;background:#555;"></div><div class="b" style="left:1305px;top:198.8px;width:1px;height:4px;background:#555;"></div><div class="b" style="left:1318px;top:198.8px;width:1px;height:4px;background:#555;"></div><div class="b" style="left:1332px;top:198px;width:1px;height:6.5px;background:#555;"></div><div class="b" style="left:1345px;top:198.8px;width:1px;height:4px;background:#555;"></div><div class="b" style="left:1359px;top:198.8px;width:1px;height:4px;background:#555;"></div><div class="b" style="left:1372px;top:198.8px;width:1px;height:4px;background:#555;"></div><div class="b" style="left:1399px;top:198.8px;width:1px;height:4px;background:#555;"></div><div class="b" style="left:1413px;top:198.8px;width:1px;height:4px;background:#555;"></div><div class="b" style="left:1426px;top:198.8px;width:1px;height:4px;background:#555;"></div>
<div class="t" style="left:734.80px;top:194.72px;font-size:12.5px;line-height:12.5px;color:#5a5a5a;">1</div>
<div class="t" style="left:842.80px;top:194.72px;font-size:12.5px;line-height:12.5px;color:#5a5a5a;">2</div>
<div class="t" style="left:950.80px;top:194.72px;font-size:12.5px;line-height:12.5px;color:#5a5a5a;">3</div>
<div class="t" style="left:1058.80px;top:194.72px;font-size:12.5px;line-height:12.5px;color:#5a5a5a;">4</div>
<div class="t" style="left:1166.80px;top:194.72px;font-size:12.5px;line-height:12.5px;color:#5a5a5a;">5</div>
<div class="t" style="left:1274.80px;top:194.72px;font-size:12.5px;line-height:12.5px;color:#5a5a5a;">6</div>
<div class="t" style="left:1382.80px;top:194.72px;font-size:12.5px;line-height:12.5px;color:#5a5a5a;">7</div>
<div class="b" style="left:683px;top:211px;width:1px;height:4px;background:#555"></div><div class="b" style="left:736px;top:211px;width:1px;height:4px;background:#555"></div><div class="b" style="left:789px;top:211px;width:1px;height:4px;background:#555"></div><div class="b" style="left:842px;top:211px;width:1px;height:4px;background:#555"></div><div class="b" style="left:895px;top:211px;width:1px;height:4px;background:#555"></div><div class="b" style="left:948px;top:211px;width:1px;height:4px;background:#555"></div><div class="b" style="left:1002px;top:211px;width:1px;height:4px;background:#555"></div><div class="b" style="left:1055px;top:211px;width:1px;height:4px;background:#555"></div><div class="b" style="left:1108px;top:211px;width:1px;height:4px;background:#555"></div><div class="b" style="left:1161px;top:211px;width:1px;height:4px;background:#555"></div><div class="b" style="left:1214px;top:211px;width:1px;height:4px;background:#555"></div><div class="b" style="left:1267px;top:211px;width:1px;height:4px;background:#555"></div><div class="b" style="left:1320px;top:211px;width:1px;height:4px;background:#555"></div>
<svg class="i" style="left:623px;top:188px;" width="14" height="29" viewBox="0 0 14 29" fill="none" stroke="#444" stroke-width="1.2" stroke-linecap="round" stroke-linejoin="round"><path d="M1.3 1.2 H12.7 V5.2 L7 12.8 L1.3 5.2 Z" fill="#fff"/><path d="M7 12.8 L12.7 17.2 V27.4 H1.3 V17.2 Z" fill="#fff"/><path d="M1.3 21.2 H12.7"/></svg>
<svg class="i" style="left:1325px;top:199px;" width="14" height="12" viewBox="0 0 14 12" fill="none" stroke="#444" stroke-width="1.2" stroke-linecap="round" stroke-linejoin="round"><path d="M1.3 10.4 V6.8 L7 1.5 L12.7 6.8 V10.4 Z" fill="#fff"/></svg>
<div class="b" style="left:1496px;top:186px;width:16px;height:16px;border:1px solid #cfcfcf;background:#f5f5f5;"></div>
<svg class="i" style="left:1500px;top:192px;" width="8" height="5" viewBox="0 0 8 5" fill="none" stroke="none" stroke-width="1" stroke-linecap="round" stroke-linejoin="round"><path d="M0.5 4 L4 0.5 L7.5 4 Z" fill="#9a9a9a" stroke="none"/></svg>
<div class="b" style="left:1496px;top:233px;width:16px;height:105px;border:1px solid #cfcfcf;background:#f5f5f5;"></div>
<div class="b" style="left:1500.5px;top:276.3px;width:7px;height:1px;background:#bdbdbd"></div><div class="b" style="left:1500.5px;top:278.2px;width:7px;height:1px;background:#bdbdbd"></div><div class="b" style="left:1500.5px;top:280.2px;width:7px;height:1px;background:#bdbdbd"></div><div class="b" style="left:1500.5px;top:282.2px;width:7px;height:1px;background:#bdbdbd"></div><div class="b" style="left:1500.5px;top:284.1px;width:7px;height:1px;background:#bdbdbd"></div><div class="b" style="left:1500.5px;top:286.1px;width:7px;height:1px;background:#bdbdbd"></div><div class="b" style="left:1500.5px;top:288.0px;width:7px;height:1px;background:#bdbdbd"></div><div class="b" style="left:1500.5px;top:289.9px;width:7px;height:1px;background:#bdbdbd"></div>
<div class="b" style="left:1496px;top:821px;width:16px;height:16px;border:1px solid #cfcfcf;background:#f5f5f5;"></div>
<svg class="i" style="left:1500px;top:827px;" width="8" height="5" viewBox="0 0 8 5" fill="none" stroke="none" stroke-width="1" stroke-linecap="round" stroke-linejoin="round"><path d="M0.5 0.5 L4 4 L7.5 0.5 Z" fill="#9a9a9a" stroke="none"/></svg>
<svg class="i" style="left:1531px;top:212px;" width="17" height="17" viewBox="0 0 17 17" fill="none" stroke="#333" stroke-width="1.2" stroke-linecap="round" stroke-linejoin="round"><path d="M9.5 1.2 V16.2 M13 1.2 V16.2 M15.5 1.2 H6.5 A4 4 0 0 0 6.5 9.2 H9.5"/></svg>
<svg class="i" style="left:1529px;top:253px;" width="19" height="19" viewBox="0 0 19 19" fill="none" stroke="#8f8f8f" stroke-width="1.1" stroke-linecap="round" stroke-linejoin="round"><rect x="0.7" y="0.7" width="17.6" height="17" rx="1.5"/><path d="M0.7 6.2 H18.3 M0.7 12 H18.3 M6.5 2.5 V17.7 M12.5 2.5 V17.7"/><path d="M1 1.5 H18" stroke-width="2"/></svg>
<svg class="i" style="left:1530px;top:296px;" width="18" height="18" viewBox="0 0 18 18" fill="none" stroke="#8f8f8f" stroke-width="1.1" stroke-linecap="round" stroke-linejoin="round"><rect x="0.8" y="0.8" width="16.4" height="16.4" rx="1"/><path d="M0.8 15.5 L8.8 8 L17.2 15.5"/><circle cx="12.5" cy="5" r="1.2"/></svg>
<svg class="i" style="left:1529px;top:337px;" width="20" height="20" viewBox="0 0 20 20" fill="none" stroke="#8f8f8f" stroke-width="1.1" stroke-linecap="round" stroke-linejoin="round"><path d="M10.2 6.8 A5.6 5.6 0 1 0 6.8 11.2"/><rect x="7.2" y="7.2" width="11.8" height="11.8" rx="1"/></svg>
<svg class="i" style="left:1531px;top:382px;" width="17" height="17" viewBox="0 0 17 17" fill="none" stroke="#8f8f8f" stroke-width="1.1" stroke-linecap="round" stroke-linejoin="round"><rect x="0.7" y="10.7" width="3.8" height="5.6" rx=".5"/><rect x="6.5" y="6.3" width="3.8" height="10" rx=".5"/><rect x="12.3" y="0.7" width="3.8" height="15.6" rx=".5"/></svg>
<svg class="i" style="left:1532px;top:423px;" width="16" height="19" viewBox="0 0 16 19" fill="none" stroke="#8f8f8f" stroke-width="1.1" stroke-linecap="round" stroke-linejoin="round"><path d="M2.2 12 L8 0.8 L13.8 12 M4.3 8.2 H11.7"/><path d="M0.5 18 Q8 12.5 15.5 18"/></svg>
<svg class="i" style="left:1531px;top:467px;" width="18" height="18" viewBox="0 0 18 18" fill="none" stroke="#8f8f8f" stroke-width="1.1" stroke-linecap="round" stroke-linejoin="round"><path d="M0.8 7 V16.4 A.6 .6 0 0 0 1.4 17 H16.6 A.6 .6 0 0 0 17.2 16.4 V7"/><path d="M0.8 7 L3.3 5.5 M17.2 7 L14.7 5.5"/><path d="M3.3 9.7 V1.6 A.8 .8 0 0 1 4.1 0.8 H13.9 A.8 .8 0 0 1 14.7 1.6 V9.7"/><path d="M0.8 7.3 L9 12 L17.2 7.3"/><path d="M6 4 H12 M6 6.8 H10"/></svg>
<svg class="i" style="left:105px;top:849px;" width="18" height="18" viewBox="0 0 18 18" fill="none" stroke="#333" stroke-width="1.2" stroke-linecap="round" stroke-linejoin="round"><path d="M2.3 1.4 H16.8 M2.3 7.5 H16.8"/><path d="M13.5 13.4 H16.8"/></svg>
<div class="t" style="left:106.10px;top:858.80px;font-size:8.5px;line-height:8.5px;color:#3e6bd6;font-weight:bold;letter-spacing:-0.650px;">12</div>
<svg class="i" style="left:1110px;top:856px;" width="9" height="7" viewBox="0 0 9 7" fill="none" stroke="#333" stroke-width="1.1" stroke-linecap="round" stroke-linejoin="round"><path d="M1.2 1 L4.5 4.6 L7.8 1"/></svg>
<svg class="i" style="left:1130px;top:848px;" width="21" height="21" viewBox="0 0 21 21" fill="none" stroke="#333" stroke-width="1.1" stroke-linecap="round" stroke-linejoin="round"><circle cx="10.5" cy="10.5" r="9.3"/><ellipse cx="10.5" cy="10.5" rx="4" ry="9.3"/><path d="M1.6 7.4 H19.4 M1.6 13.5 H19.4"/></svg>
<svg class="i" style="left:1160px;top:843px;" width="30" height="30" viewBox="0 0 30 30" fill="none" stroke="#333" stroke-width="1.15" stroke-linecap="round" stroke-linejoin="round"><path d="M12.8 23.6 H8.5 A1.2 1.2 0 0 1 7.3 22.4 V8.6 A1.2 1.2 0 0 1 8.5 7.4 H22.6 A1.2 1.2 0 0 1 23.8 8.6 V17.6"/><path d="M12.2 19.6 L15.5 11.2 L18.8 19.6 M13.3 17.2 H17.7"/></svg>
<svg class="i" style="left:1160px;top:843px;" width="30" height="30" viewBox="0 0 30 30" fill="none" stroke="#3e6bd6" stroke-width="1.15" stroke-linecap="round" stroke-linejoin="round"><path d="M17.3 22.2 L20.5 25.6 L25.9 19.4"/></svg>
<svg class="i" style="left:1210px;top:849px;" width="22" height="20" viewBox="0 0 22 20" fill="none" stroke="#3e6bd6" stroke-width="1.2" stroke-linecap="round" stroke-linejoin="round"><path d="M2.5 4.5 H8.1 M2.5 8.5 H10.2"/></svg>
<svg class="i" style="left:1210px;top:849px;" width="22" height="20" viewBox="0 0 22 20" fill="none" stroke="#333" stroke-width="1.15" stroke-linecap="round" stroke-linejoin="round"><path d="M5.4 12.6 Q4.2 13.6 4.3 14.5 V17.5 H8.9 L20.2 6.2 A1 1 0 0 0 20.2 4.8 L17.4 2.0 A1 1 0 0 0 16 2.0 L12.8 5.3 M14.1 4.1 L18.1 8.3"/></svg>
<svg class="i" style="left:1242px;top:856px;" width="8" height="7" viewBox="0 0 8 7" fill="none" stroke="#333" stroke-width="1.1" stroke-linecap="round" stroke-linejoin="round"><path d="M0.8 1 L4 4.6 L7.2 1"/></svg>
<svg class="i" style="left:1275px;top:849px;" width="24" height="17" viewBox="0 0 24 17" fill="none" stroke="#333" stroke-width="1.2" stroke-linecap="round" stroke-linejoin="round"><rect x="0.8" y="0.9" width="9.6" height="14.6" rx="1.2"/><rect x="12.6" y="0.9" width="9.6" height="14.6" rx="1.2"/></svg>
<svg class="i" style="left:1275px;top:849px;" width="24" height="17" viewBox="0 0 24 17" fill="none" stroke="#3e6bd6" stroke-width="1.1" stroke-linecap="round" stroke-linejoin="round"><path d="M3.3 4.3 H8 M3.3 8.2 H8 M3.3 12.1 H8 M15.1 4.3 H19.8 M15.1 8.2 H19.8 M15.1 12.1 H19.8"/></svg>
<svg class="i" style="left:1319px;top:848px;" width="17" height="21" viewBox="0 0 17 21" fill="none" stroke="#333" stroke-width="1.2" stroke-linecap="round" stroke-linejoin="round"><rect x="0.9" y="0.9" width="14.6" height="18.8" rx="1.5"/></svg>
<svg class="i" style="left:1319px;top:848px;" width="17" height="21" viewBox="0 0 17 21" fill="none" stroke="#3e6bd6" stroke-width="1.1" stroke-linecap="round" stroke-linejoin="round"><path d="M3.7 6.3 V3.7 H6.3 M10.2 3.7 H12.8 V6.3 M3.7 13.4 V16 H6.3 M10.2 16 H12.8 V13.4"/></svg>
<svg class="i" style="left:1358px;top:848px;" width="19" height="21" viewBox="0 0 19 21" fill="none" stroke="#333" stroke-width="1.2" stroke-linecap="round" stroke-linejoin="round"><path d="M1 10.5 V1 H17.2 V10.5"/></svg>
<svg class="i" style="left:1358px;top:848px;" width="19" height="21" viewBox="0 0 19 21" fill="none" stroke="#3e6bd6" stroke-width="1.1" stroke-linecap="round" stroke-linejoin="round"><path d="M1.5 16.5 H7 M3.5 14.5 L1.5 16.5 L3.5 18.5 M11 16.5 H16.7 M14.7 14.5 L16.7 16.5 L14.7 18.5"/></svg>
<svg class="i" style="left:1399px;top:857px;" width="17" height="3" viewBox="0 0 17 3" fill="none" stroke="#333" stroke-width="1.2" stroke-linecap="round" stroke-linejoin="round"><path d="M0.8 1.2 H15.4"/></svg>
<svg class="i" style="left:1529px;top:850px;" width="17" height="17" viewBox="0 0 17 17" fill="none" stroke="#333" stroke-width="1.2" stroke-linecap="round" stroke-linejoin="round"><path d="M0.8 8.3 H15.8 M8.3 0.8 V15.8"/></svg>

</body></html>
